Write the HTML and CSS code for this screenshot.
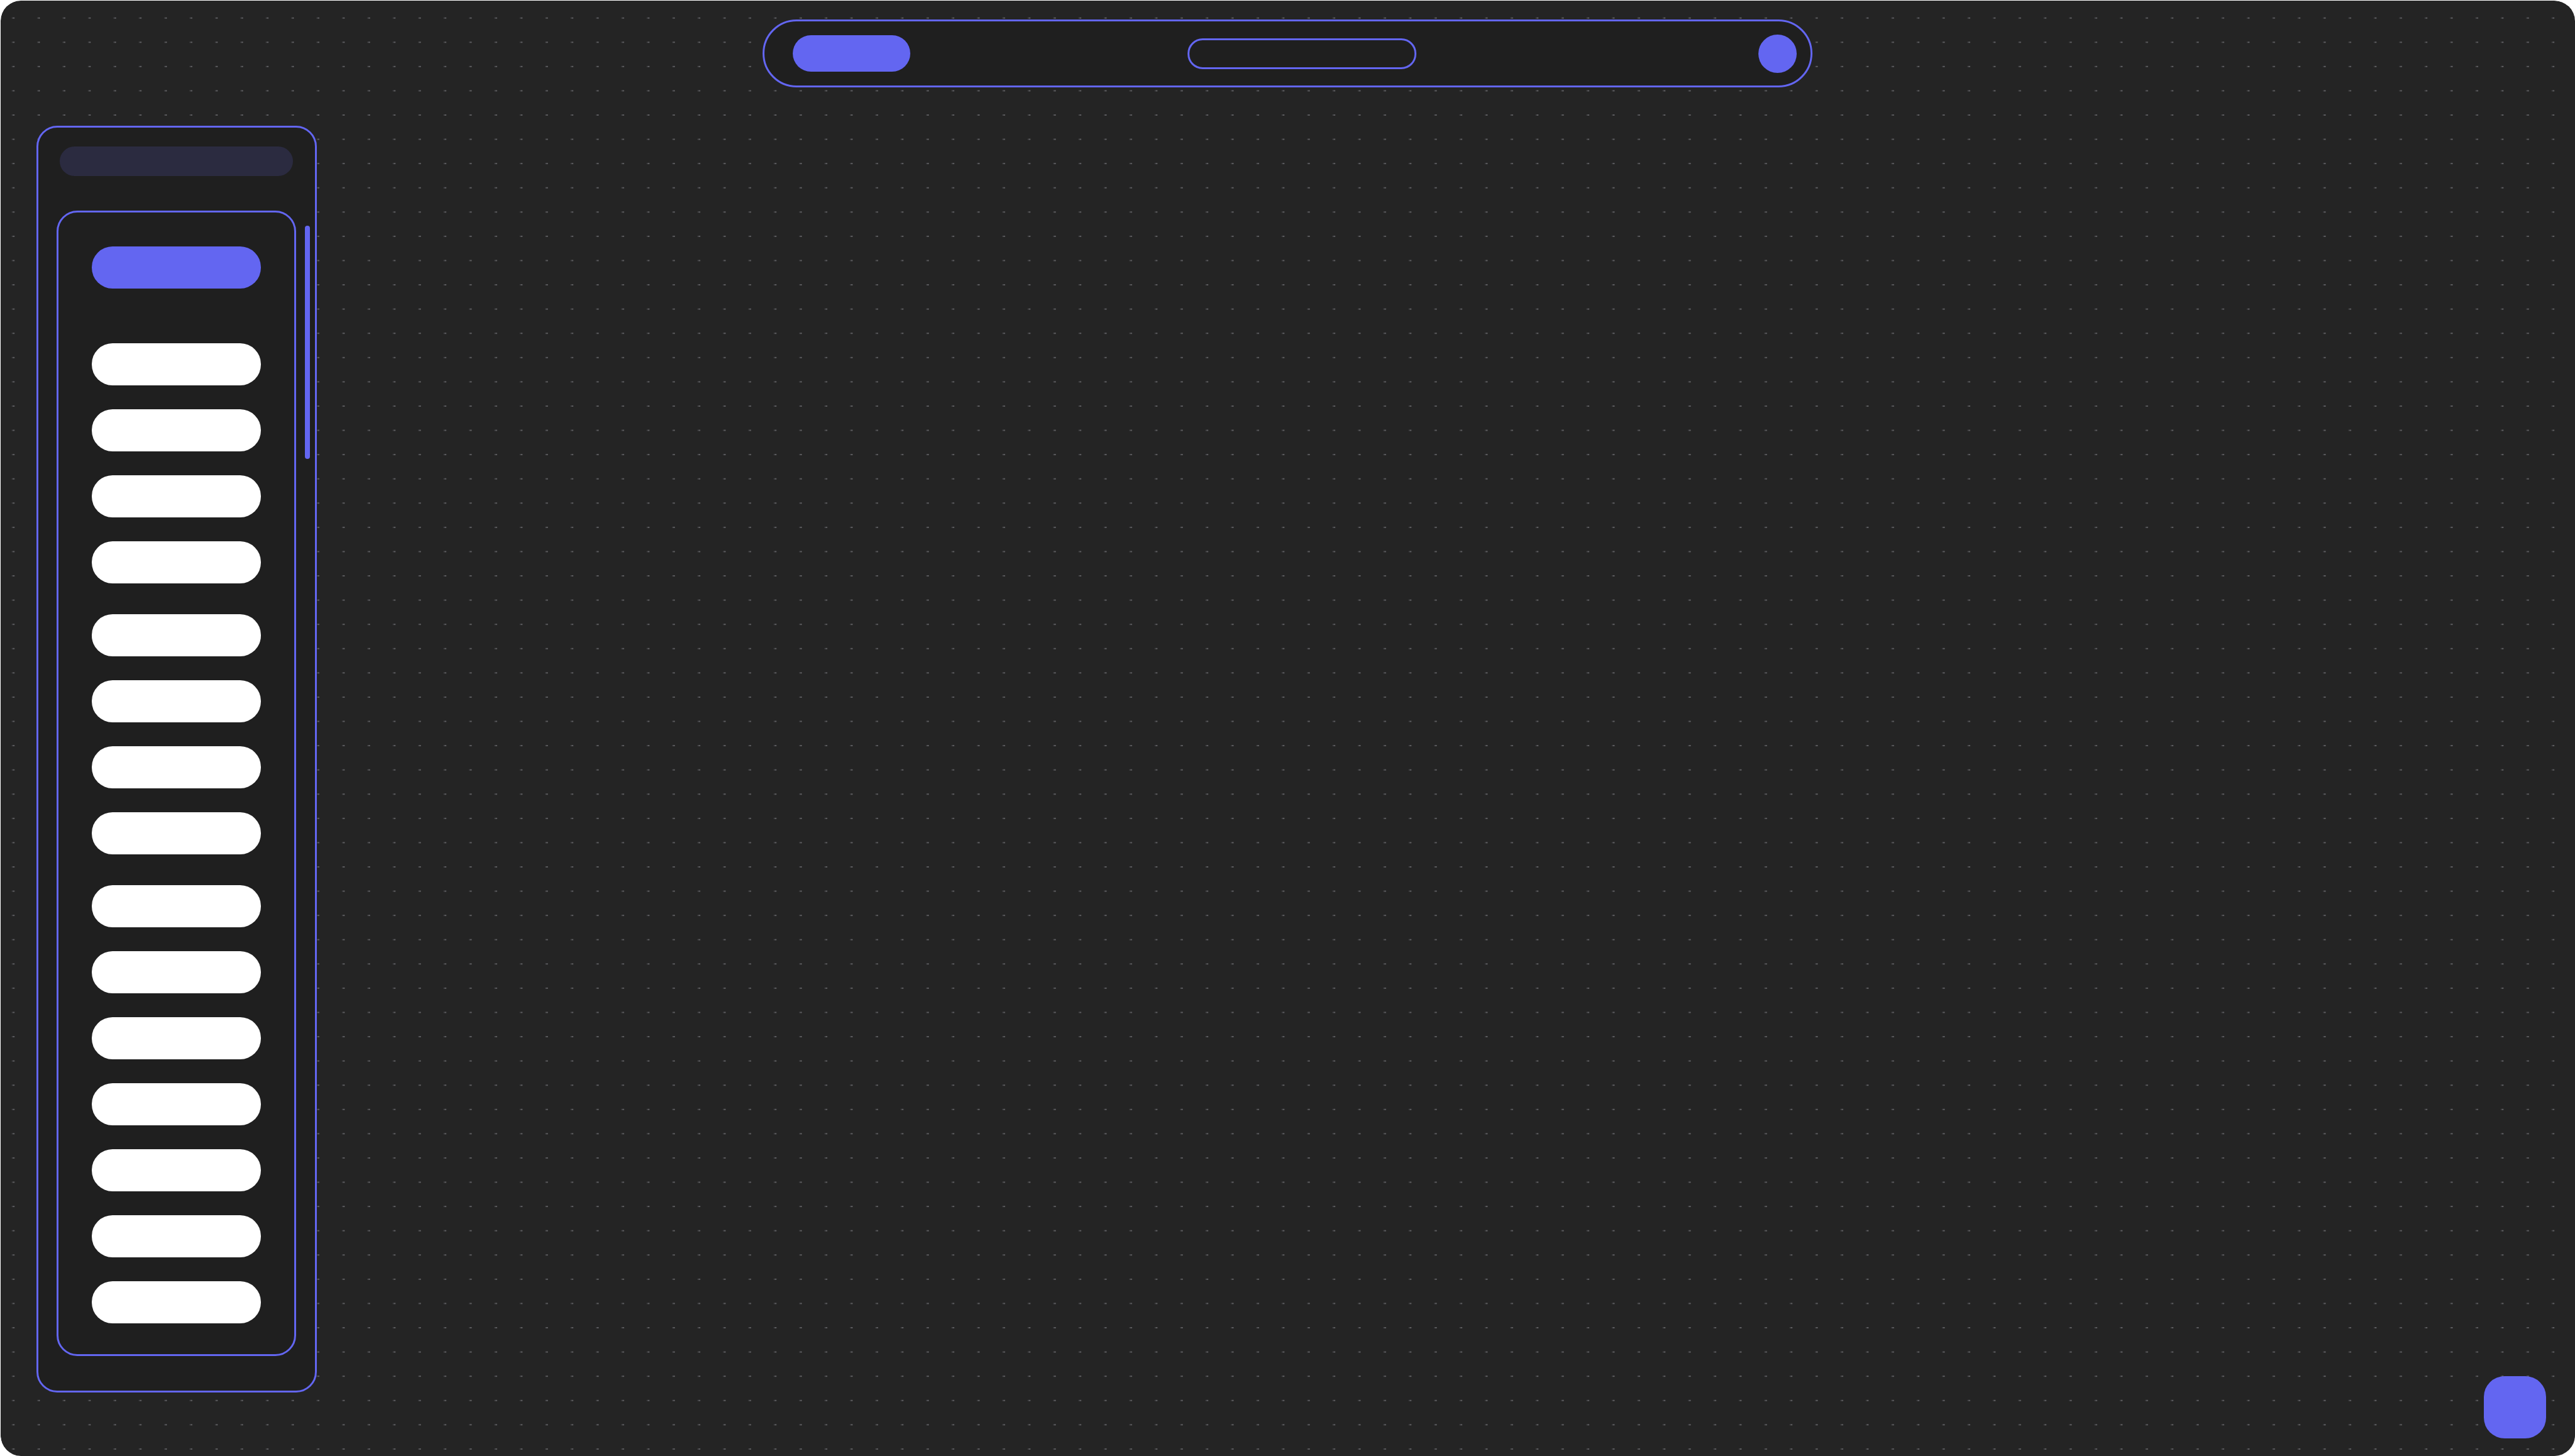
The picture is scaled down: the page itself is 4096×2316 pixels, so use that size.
FILE: index.html
```html
<!DOCTYPE html>
<html lang="en">
<head>
<meta charset="utf-8">
<meta name="viewport" content="width=device-width, initial-scale=1">
<title>Workspace</title>
<link rel="stylesheet" href="styles.css">
</head>
<body>
<div class="screen">
  <svg class="dots" viewBox="0 0 409600 231600" preserveAspectRatio="xMinYMin slice" aria-hidden="true">
    <defs>
      <pattern id="dot" width="4040" height="3858" patternUnits="userSpaceOnUse">
        <rect x="1880" y="2780" width="210" height="170" fill="#464649"/>
        <rect x="2090" y="2780" width="200" height="170" fill="#78787c"/>
      </pattern>
    </defs>
    <rect width="409600" height="231600" fill="url(#dot)"/>
  </svg>

  <header class="topbar">
    <button class="brand" type="button" aria-label="Home"></button>
    <input class="topbar-field" type="text" aria-label="Title">
    <button class="avatar" type="button" aria-label="Account"></button>
  </header>

  <main class="workspace">
    <aside class="sidebar">
      <input class="sidebar-search" type="search" aria-label="Search">
      <nav class="menu" aria-label="Components">
        <button class="item item-primary" type="button" aria-label="New"></button>
        <div class="group">
          <button class="item" type="button" aria-label="Item 1"></button>
          <button class="item" type="button" aria-label="Item 2"></button>
          <button class="item" type="button" aria-label="Item 3"></button>
          <button class="item" type="button" aria-label="Item 4"></button>
        </div>
        <div class="group">
          <button class="item" type="button" aria-label="Item 5"></button>
          <button class="item" type="button" aria-label="Item 6"></button>
          <button class="item" type="button" aria-label="Item 7"></button>
          <button class="item" type="button" aria-label="Item 8"></button>
        </div>
        <div class="group">
          <button class="item" type="button" aria-label="Item 9"></button>
          <button class="item" type="button" aria-label="Item 10"></button>
          <button class="item" type="button" aria-label="Item 11"></button>
          <button class="item" type="button" aria-label="Item 12"></button>
          <button class="item" type="button" aria-label="Item 13"></button>
          <button class="item" type="button" aria-label="Item 14"></button>
          <button class="item" type="button" aria-label="Item 15"></button>
        </div>
      </nav>
      <div class="scroll-thumb"></div>
    </aside>
  </main>

  <button class="fab" type="button" aria-label="Add"></button>
</div>
</body>
</html>
```
FILE: styles.css
```css
:root {
  --accent: #6366f1;
  --canvas: #242424;
  --panel: #1f1f1f;
  --muted: #2b2b40;
}

* {
  box-sizing: border-box;
}

body {
  margin: 0;
  background: #fff;
  font-family: Inter, sans-serif;
}

button,
input {
  margin: 0;
  padding: 0;
  border: 0;
  appearance: none;
  color: #fff;
  font: inherit;
}

.screen {
  position: relative;
  display: flex;
  flex-direction: column;
  min-height: 100vh;
  padding: 30px 58px 0 57px;
  border: solid #fff;
  border-width: 1px 0 0 1px;
  border-radius: 33px;
  background: var(--canvas);
  background-clip: padding-box;
  overflow: hidden;
}

/* Dot grid behind the canvas */
.dots {
  position: absolute;
  inset: -1px 0 0 -1px;
  width: calc(100% + 1px);
  height: calc(100% + 1px);
}

.topbar {
  position: relative;
  display: flex;
  align-items: center;
  width: min(1670px, 100%);
  height: 108px;
  margin: 0 auto;
  padding: 0 22px 0 45px;
  border: 3px solid var(--accent);
  border-radius: 54px;
  background: var(--panel);
}

.brand {
  width: 187px;
  height: 58px;
  border-radius: 29px;
  background: var(--accent);
}

.topbar-field {
  width: 364px;
  height: 49px;
  margin: 0 auto 0 441px;
  padding: 0 24px;
  border: 3px solid var(--accent);
  border-radius: 24px;
  background: transparent;
}

.avatar {
  width: 61px;
  height: 61px;
  border-radius: 50%;
  background: var(--accent);
}

.workspace {
  position: relative;
  display: flex;
  flex: 1;
  padding: 61px 0 101px;
}

.sidebar {
  display: grid;
  grid-template: 47px 1fr / 1fr 8px;
  gap: 55px 14px;
  width: 446px;
  padding: 30px 8px 55px 29px;
  border: 3px solid var(--accent);
  border-radius: 33px;
  background: var(--panel);
}

.sidebar-search {
  margin: 0 5px;
  padding: 0 24px;
  border-radius: 24px;
  background: var(--muted);
}

.menu {
  display: flex;
  flex-direction: column;
  grid-row: 2;
  gap: 49px;
  padding: 54px 53px 0;
  border: 3px solid var(--accent);
  border-radius: 33px;
}

.group {
  display: flex;
  flex-direction: column;
  gap: 38px;
}

.item {
  height: 67px;
  border-radius: 33px;
  background: #fff;
}

.item-primary {
  margin-bottom: 38px;
  background: var(--accent);
}

.scroll-thumb {
  grid-row: 2;
  grid-column: 2;
  height: 371px;
  margin-top: 24px;
  border-radius: 4px;
  background: var(--accent);
}

.fab {
  position: absolute;
  right: 46px;
  bottom: 28px;
  width: 99px;
  height: 99px;
  border-radius: 33px;
  background: var(--accent);
}
```
